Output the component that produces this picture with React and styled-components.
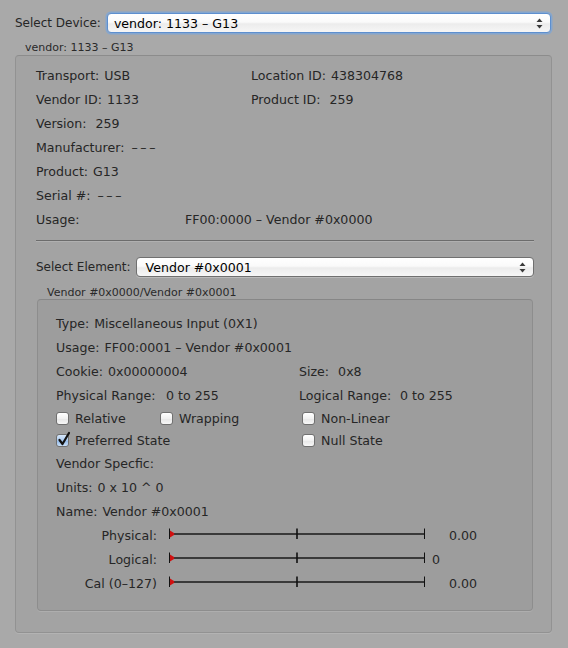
import React from 'react';
import styled, { createGlobalStyle } from 'styled-components';

const Global = createGlobalStyle`
  html, body { margin: 0; padding: 0; background: #a9a9a9; }
  body {
    font-family: "DejaVu Sans", "Lucida Grande", sans-serif;
    font-size: 12.6px;
    color: #262626;
  }
`;

const Page = styled.div`
  width: 568px;
  height: 648px;
  box-sizing: border-box;
  padding: 13px 16px 0 15px;
  background: #a9a9a9;
`;

const SelectRow = styled.div`
  display: flex;
  align-items: center;
  gap: ${p => p.$gap || 6}px;
  height: 20px;
`;

const Label = styled.span`
  white-space: nowrap;
  font-size: 12px;
`;

const Popup = styled.div`
  flex: 1;
  height: 20px;
  box-sizing: border-box;
  margin-right: ${p => (p.$focused ? 1 : 0)}px;
  border-radius: 4px;
  border: 1px solid ${p => (p.$focused ? '#5d8fcf' : '#707070')};
  box-shadow: ${p => (p.$focused ? '0 0 0 1.5px rgba(120,165,220,0.75)' : '0 1px 0 rgba(255,255,255,0.25)')};
  background: linear-gradient(#ffffff 0%, #fafafa 45%, #ececec 55%, #f6f6f6 100%);
  display: flex;
  align-items: center;
  justify-content: space-between;
  padding: 0 7px 0 ${p => (p.$focused ? 6 : 9)}px;
  color: #000;
  font-size: 12.6px;
`;

const Caption = styled.div`
  font-size: 11px;
  line-height: 13px;
  margin: ${p => p.$margin};
  color: #2a2a2a;
`;

const Box = styled.div`
  box-sizing: border-box;
  height: ${p => p.$height}px;
  margin: ${p => p.$margin || '0'};
  padding: ${p => p.$padding};
  border: 1px solid rgba(0, 0, 0, 0.1);
  border-top-color: rgba(0, 0, 0, 0.14);
  border-radius: 4px;
  background: rgba(0, 0, 0, 0.035);
  box-shadow: 0 1px 0 rgba(255, 255, 255, 0.12);
`;

const InfoGrid = styled.div`
  display: grid;
  grid-template-columns: ${p => p.$cols};
  grid-auto-rows: ${p => p.$row || 24}px;
  align-items: center;
`;

const Field = styled.div`
  display: flex;
  align-items: center;
  white-space: nowrap;
  grid-column: ${p => (p.$span ? '1 / -1' : 'auto')};
`;

const FieldLabel = styled.span`
  display: inline-block;
  width: ${p => (p.$w ? `${p.$w}px` : 'auto')};
  margin-right: ${p => (p.$w ? 0 : 5)}px;
`;

const Dashes = styled.span`
  letter-spacing: 2.6px;
  margin-left: 2px;
`;

const Separator = styled.div`
  height: 1px;
  background: #6c6c6c;
  box-shadow: 0 1px 0 rgba(255, 255, 255, 0.15);
  margin: 9px 0 16px 0;
`;

const CheckRow = styled.div`
  display: grid;
  grid-template-columns: 104px 142px 1fr;
  height: 22px;
  align-items: center;
`;

const CheckItem = styled.label`
  display: flex;
  align-items: center;
  gap: 6px;
  white-space: nowrap;
`;

const CheckBox = styled.span`
  width: 13px;
  height: 13px;
  box-sizing: border-box;
  border-radius: 3px;
  border: 1px solid #707070;
  background: ${p =>
    p.$checked
      ? 'linear-gradient(#d8e8fa, #a9c9ef 50%, #8fb7e8 51%, #c9e0f8)'
      : 'linear-gradient(#ffffff, #f1f1f1 50%, #e6e6e6 51%, #f7f7f7)'};
  position: relative;
  flex: none;
`;

const CheckMark = styled.svg`
  position: absolute;
  left: 0px;
  top: -4px;
`;

const SliderRow = styled.div`
  display: grid;
  grid-template-columns: 101px 12px 258px auto;
  height: 24px;
  align-items: center;
`;

const SliderLabel = styled.span`
  text-align: right;
  white-space: nowrap;
`;

const SliderValue = styled.span`
  padding-left: ${p => p.$pad}px;
  margin-top: 1px;
`;

const Arrows = () => (
  <svg width="7" height="11" viewBox="0 0 7 11">
    <path d="M3.5 0.5 L6.5 4 L0.5 4 Z" fill="#3a3a3a" />
    <path d="M3.5 10.5 L6.5 7 L0.5 7 Z" fill="#3a3a3a" />
  </svg>
);

const Check = ({ checked, children }) => (
  <CheckItem>
    <CheckBox $checked={checked}>
      {checked && (
        <CheckMark width="14" height="16" viewBox="0 0 14 16">
          <path d="M2.5 9 L5.5 13 L12 2" fill="none" stroke="#111" strokeWidth="2.2" strokeLinecap="round" strokeLinejoin="round" />
        </CheckMark>
      )}
    </CheckBox>
    {children}
  </CheckItem>
);

const Track = () => (
  <svg width="258" height="14" viewBox="0 0 258 14" style={{ marginTop: -3 }}>
    <line x1="1" y1="7" x2="256" y2="7" stroke="#3a3a3a" strokeWidth="2" />
    <line x1="0.5" y1="1.5" x2="0.5" y2="12" stroke="#111" strokeWidth="1" />
    <line x1="128" y1="1.5" x2="128" y2="12" stroke="#111" strokeWidth="1.6" />
    <line x1="255.5" y1="1.5" x2="255.5" y2="12" stroke="#111" strokeWidth="1" />
    <path d="M1 3.5 L5 6 Q5.6 7 5 8 L1 10.5 Z" fill="#d01010" />
  </svg>
);

const Slider = ({ label, value, pad }) => (
  <SliderRow>
    <SliderLabel>{label}</SliderLabel>
    <span />
    <Track />
    <SliderValue $pad={pad}>{value}</SliderValue>
  </SliderRow>
);

export default function App() {
  return (
    <>
      <Global />
      <Page>
        <SelectRow $gap={6}>
          <Label>Select Device:</Label>
          <Popup $focused>
            <span>vendor: 1133 – G13</span>
            <Arrows />
          </Popup>
        </SelectRow>
        <Caption $margin="8px 0 1px 10px">vendor: 1133 – G13</Caption>
        <Box $height={578} $padding="7px 17px 0 20px">
          <InfoGrid $cols="215px 1fr">
            <Field><FieldLabel>Transport:</FieldLabel>USB</Field>
            <Field><FieldLabel>Location ID:</FieldLabel>438304768</Field>
            <Field><FieldLabel>Vendor ID:</FieldLabel>1133</Field>
            <Field><FieldLabel>Product ID:</FieldLabel>&nbsp;259</Field>
            <Field $span><FieldLabel>Version:</FieldLabel>&nbsp;259</Field>
            <Field $span><FieldLabel>Manufacturer:</FieldLabel><Dashes>–––</Dashes></Field>
            <Field $span><FieldLabel>Product:</FieldLabel>G13</Field>
            <Field $span><FieldLabel>Serial #:</FieldLabel><Dashes>–––</Dashes></Field>
            <Field $span><FieldLabel $w={149}>Usage:</FieldLabel>FF00:0000 – Vendor #0x0000</Field>
          </InfoGrid>
          <Separator />
          <SelectRow $gap={5}>
            <Label>Select Element:</Label>
            <Popup>
              <span>Vendor #0x0001</span>
              <Arrows />
            </Popup>
          </SelectRow>
          <Caption $margin="9px 0 0 11px">Vendor #0x0000/Vendor #0x0001</Caption>
          <Box $height={312} $margin="0 1px" $padding="11px 0 0 18px">
            <InfoGrid $cols="243px 1fr">
              <Field $span><FieldLabel>Type:</FieldLabel>Miscellaneous Input (0X1)</Field>
              <Field $span><FieldLabel>Usage:</FieldLabel>FF00:0001 – Vendor #0x0001</Field>
              <Field><FieldLabel>Cookie:</FieldLabel>0x00000004</Field>
              <Field><FieldLabel>Size:</FieldLabel>&nbsp;0x8</Field>
              <Field><FieldLabel $w={110}>Physical Range:</FieldLabel>0 to 255</Field>
              <Field><FieldLabel $w={101}>Logical Range:</FieldLabel>0 to 255</Field>
            </InfoGrid>
            <CheckRow>
              <Check>Relative</Check>
              <Check>Wrapping</Check>
              <Check>Non-Linear</Check>
            </CheckRow>
            <CheckRow>
              <Check checked>Preferred State</Check>
              <span />
              <Check>Null State</Check>
            </CheckRow>
            <InfoGrid $cols="1fr">
              <Field>Vendor Specfic:</Field>
              <Field><FieldLabel>Units:</FieldLabel>0 x 10 ^ 0</Field>
              <Field><FieldLabel>Name:</FieldLabel>Vendor #0x0001</Field>
            </InfoGrid>
            <Slider label="Physical:" value="0.00" pad={22} />
            <Slider label="Logical:" value="0" pad={5} />
            <Slider label="Cal (0–127)" value="0.00" pad={22} />
          </Box>
        </Box>
      </Page>
    </>
  );
}
